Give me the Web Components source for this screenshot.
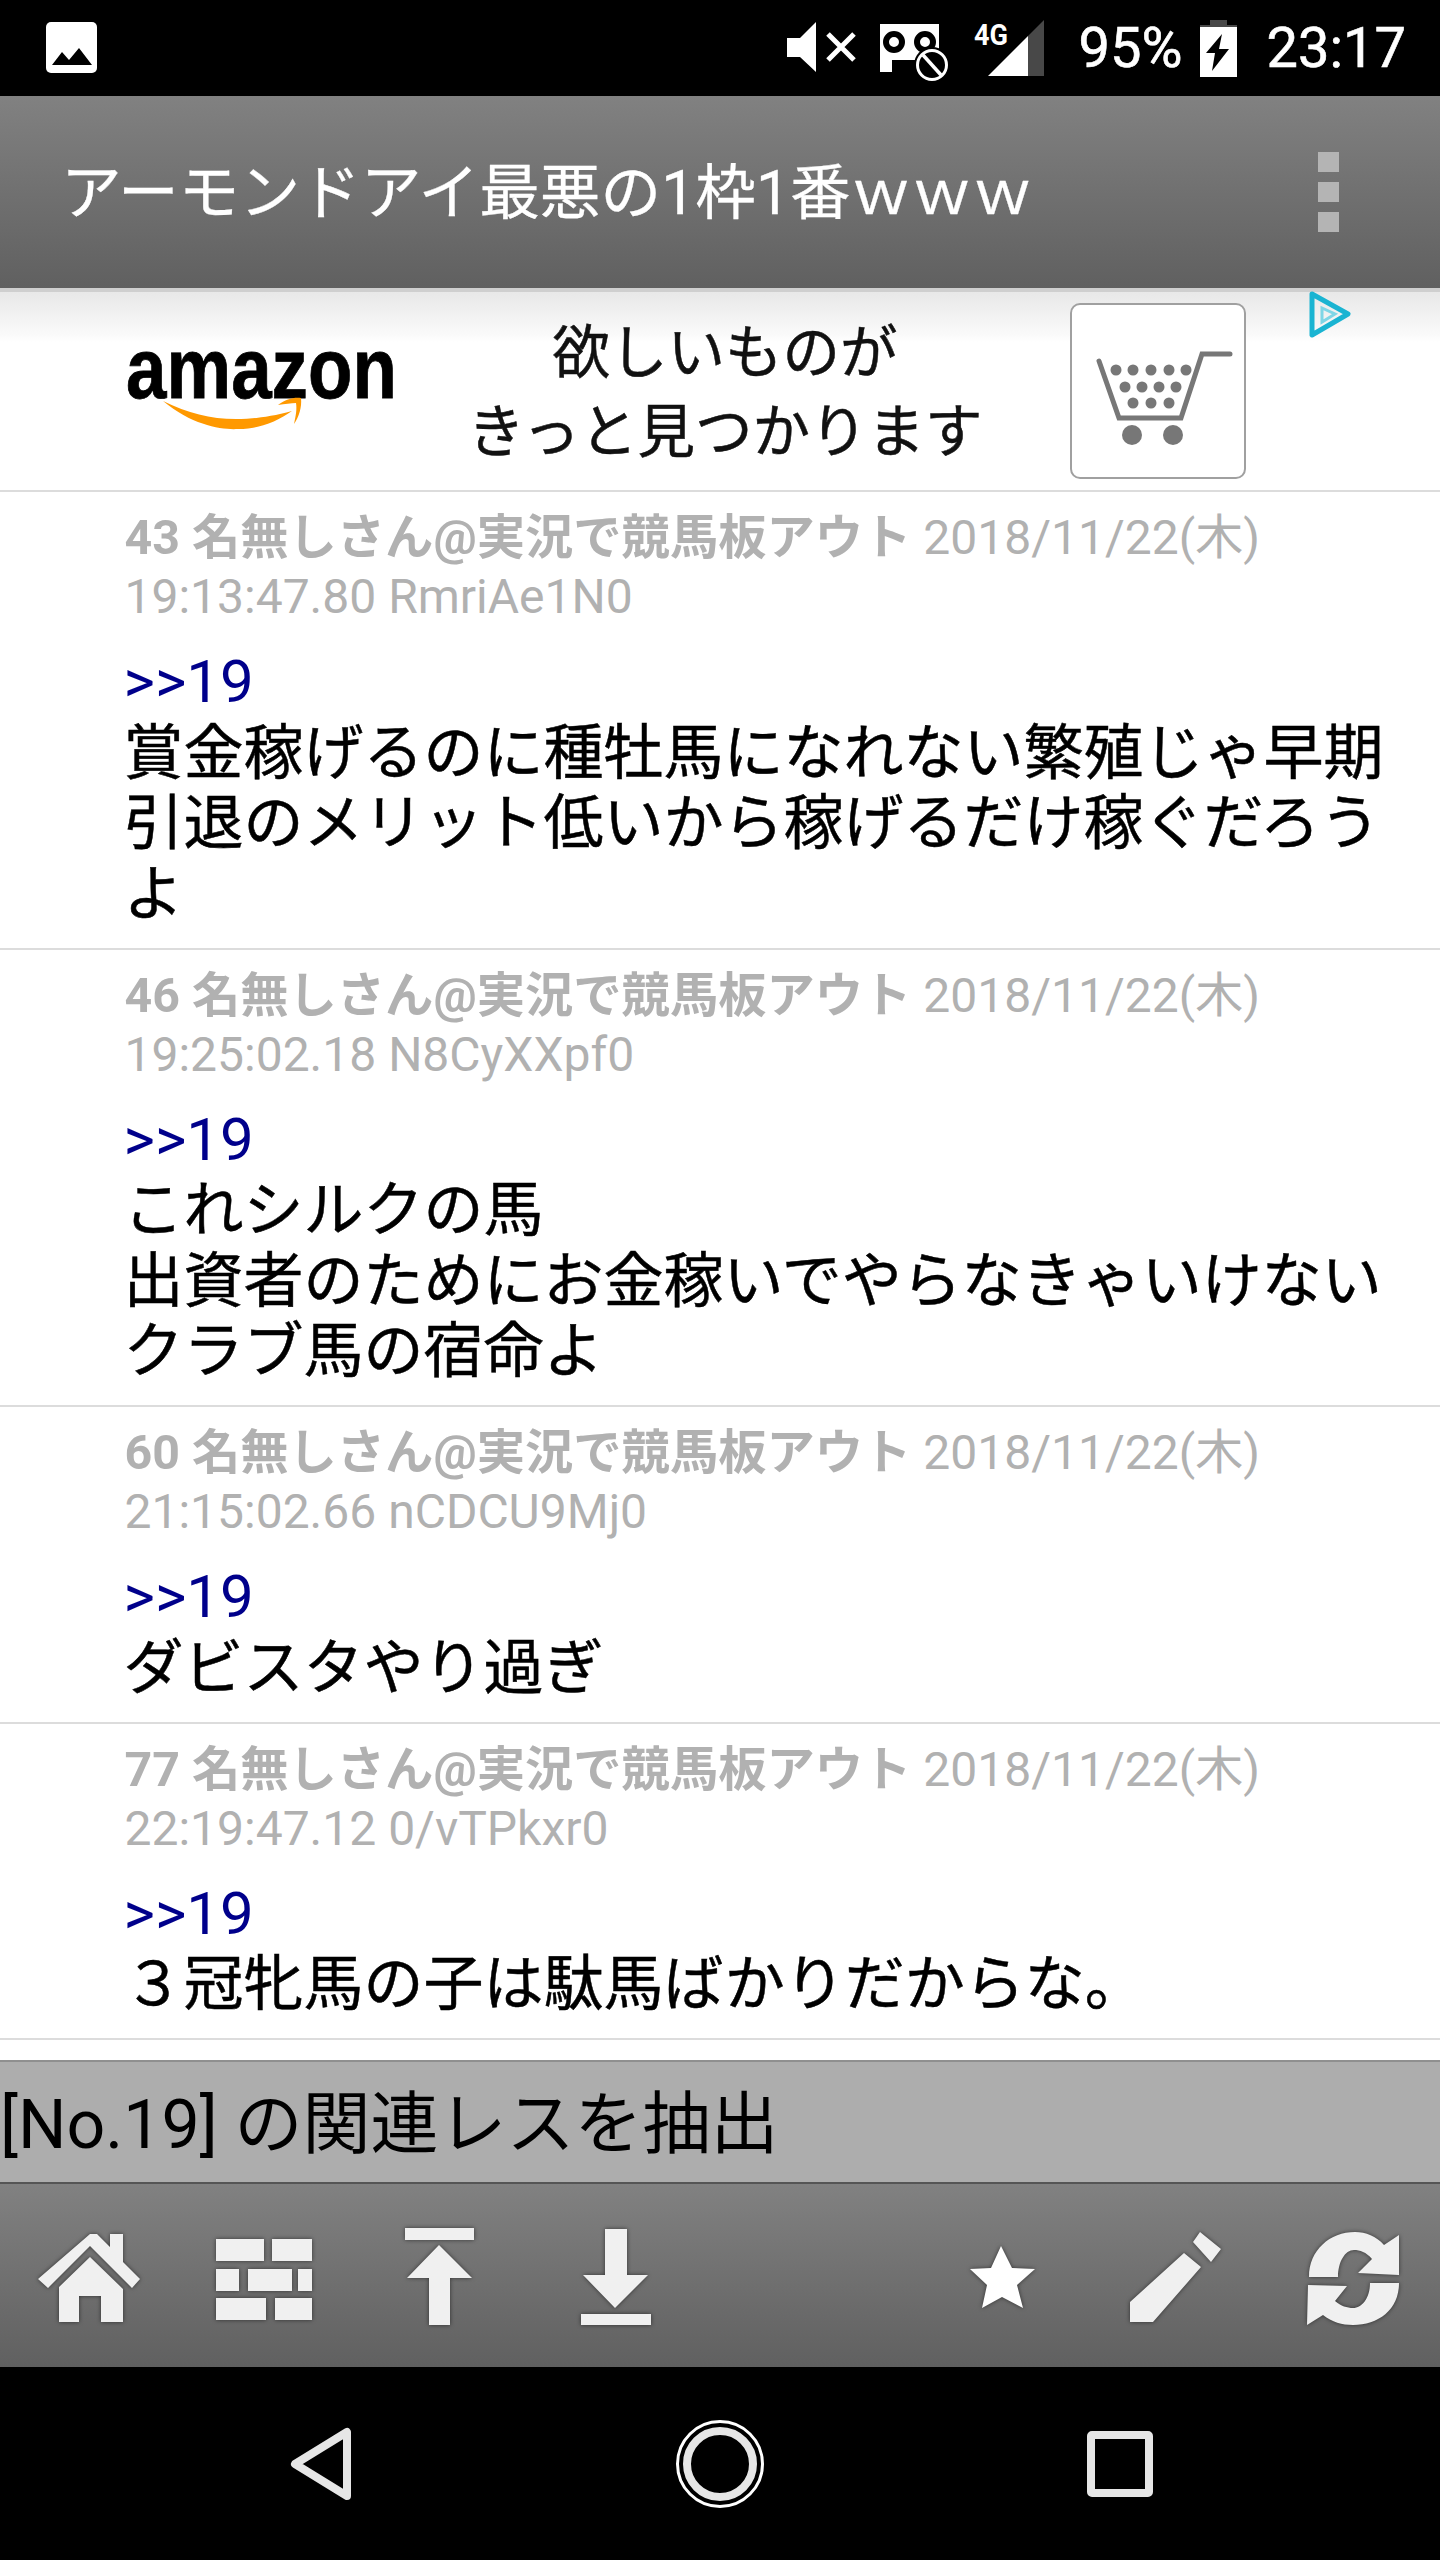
<!DOCTYPE html>
<html lang="ja">
<head>
<meta charset="utf-8">
<title>res</title>
<style>
    html, body { margin: 0; padding: 0; background: #fff; }
    body { width: 1440px; height: 2560px; overflow: hidden; font-family: Roboto, "Noto Sans CJK JP", sans-serif; }
</style>
</head>
<body>
<phone-screen>
    <status-bar></status-bar>
    <title-bar>アーモンドアイ最悪の1枠1番ｗｗｗ</title-bar>
    <ad-banner></ad-banner>
    <res-item num="43" date="2018/11/22(木)" time="19:13:47.80" uid="RmriAe1N0">賞金稼げるのに種牡馬になれない繁殖じゃ早期引退のメリット低いから稼げるだけ稼ぐだろうよ</res-item>
    <res-item num="46" date="2018/11/22(木)" time="19:25:02.18" uid="N8CyXXpf0">これシルクの馬<br>出資者のためにお金稼いでやらなきゃいけないクラブ馬の宿命よ</res-item>
    <res-item num="60" date="2018/11/22(木)" time="21:15:02.66" uid="nCDCU9Mj0">ダビスタやり過ぎ</res-item>
    <res-item num="77" date="2018/11/22(木)" time="22:19:47.12" uid="0/vTPkxr0">３冠牝馬の子は駄馬ばかりだからな。</res-item>
    <extract-bar>[No.19] の関連レスを抽出</extract-bar>
    <tool-bar></tool-bar>
    <nav-bar></nav-bar>
</phone-screen>

<script>
class PhoneScreen extends HTMLElement {
    constructor() {
        super();
        this.attachShadow({ mode: "open" });
        this.shadowRoot.innerHTML = `
            <style>
                :host {
                    display: flex;
                    flex-direction: column;
                    width: 1440px;
                    height: 2560px;
                    background: #fff;
                }
            </style>
            <slot></slot>
        `;
    }
}

class StatusBar extends HTMLElement {
    constructor() {
        super();
        this.attachShadow({ mode: "open" });
        this.shadowRoot.innerHTML = `
            <style>
                :host {
                    display: flex;
                    height: 96px;
                    background: #000;
                    color: #fff;
                    font-size: 56px;
                    align-items: flex-start;
                    flex: none;
                    -webkit-text-stroke: .6px #fff;
                }
                svg { display: block; height: 96px; flex: none; }
                .label { line-height: 96px; flex: none; }
                .pct { margin-left: 34px; width: 104px; white-space: nowrap; }
                .time { margin-left: 29px; }
                .spacer { flex: 1; }
            </style>
            <svg style="margin-left:46px" width="51" viewBox="46 0 51 96">
                <rect x="46" y="22" width="51" height="51" rx="5" fill="#fff"/>
                <path d="M52 65 L62 52 L69 60 L79 48 L92 65 Z" fill="#000"/>
            </svg>
            <div class="spacer"></div>
            <svg width="72" viewBox="786 0 72 96">
                <path d="M787 38 H800 L816 22 V72 L800 57 H787 Z" fill="#fff"/>
                <path d="M828 34 L854 60 M854 34 L828 60" stroke="#fff" stroke-width="5" fill="none"/>
            </svg>
            <svg style="margin-left:22px" width="70" viewBox="880 0 70 96">
                <path d="M880 24 H939 V60 H892 V72 H880 Z" fill="#fff"/>
                <circle cx="894" cy="42" r="8" fill="none" stroke="#000" stroke-width="6"/>
                <circle cx="925" cy="42" r="8" fill="none" stroke="#000" stroke-width="6"/>
                <circle cx="932" cy="65" r="18" fill="#000"/>
                <circle cx="932" cy="65" r="14.5" fill="none" stroke="#fff" stroke-width="3"/>
                <path d="M923 55 L941 75" stroke="#fff" stroke-width="3.5"/>
            </svg>
            <svg style="margin-left:23px" width="72" viewBox="973 0 72 96">
                <text x="974" y="45" font-family="Roboto" font-weight="700" font-size="30" fill="#fff" stroke="none" textLength="34" lengthAdjust="spacingAndGlyphs">4G</text>
                <path d="M988 76 L1028 36 V76 Z" fill="#fff"/>
                <path d="M1028 36 L1044 20 V76 H1028 Z" fill="#484848"/>
            </svg>
            <div class="label pct">95%</div>
            <svg style="margin-left:17px" width="38" viewBox="1199 0 38 96">
                <path d="M1209 20 H1226 V25 H1236 V34 H1199 V25 H1209 Z" fill="#484848"/>
                <rect x="1199" y="27" width="37" height="50" fill="#fff"/>
                <path d="M1221 34 L1205 53 H1214 L1211 71 L1228 49 H1218 Z" fill="#000"/>
            </svg>
            <div class="label time">23:17</div>
            <div style="width:34px;flex:none"></div>
        `;
    }
}

class TitleBar extends HTMLElement {
    constructor() {
        super();
        this.attachShadow({ mode: "open" });
        this.shadowRoot.innerHTML = `
            <style>
                :host {
                    display: flex;
                    align-items: center;
                    height: 192px;
                    flex: none;
                    padding-left: 61px;
                    padding-right: 101px;
                    box-sizing: border-box;
                    background: linear-gradient(#818181, #606060);
                    color: #fff;
                    font-size: 60.7px;
                    white-space: nowrap;
                    -webkit-text-stroke: .3px #fff;
                }
                .name { flex: 1; margin-top: -9px; }
                .menu { display: flex; flex-direction: column; gap: 10px; }
                .menu i { display: block; width: 21px; height: 20px; background: #b4b4b4; }
            </style>
            <div class="name"><slot></slot></div>
            <div class="menu"><i></i><i></i><i></i></div>
        `;
    }
}

class AdBanner extends HTMLElement {
    constructor() {
        super();
        this.attachShadow({ mode: "open" });
        this.shadowRoot.innerHTML = `
            <style>
                :host {
                    display: flex;
                    align-items: center;
                    position: relative;
                    height: 204px;
                    flex: none;
                    box-sizing: border-box;
                    border-top: 4px solid #cfcfcf;
                    border-bottom: 2px solid #dcdcdc;
                    background: linear-gradient(#e8e8e8, #fafafa 43px, #fff 50px);
                    color: #111;
                }
                .logo { position: relative; width: 270px; height: 100px; margin-left: 126px; flex: none; filter: blur(.5px); }
                .logo span {
                    position: absolute;
                    left: 0;
                    top: -23px;
                    font: 700 86px/100px "Liberation Sans", sans-serif;
                    color: #000;
                    -webkit-text-stroke: .8px #000;
                    transform: scaleX(.846);
                    transform-origin: 0 0;
                }
                .logo svg { position: absolute; left: 0; top: 8px; }
                .copy {
                    width: 560px;
                    margin-left: 49px;
                    padding-top: 4px;
                    text-align: center;
                    font-size: 57.5px;
                    line-height: 79px;
                    flex: none;
                    filter: blur(.4px);
                    white-space: nowrap;
                    -webkit-text-stroke: .5px #111;
                }
                .cart { margin-left: 65px; flex: none; display: block; filter: blur(.4px); }
                .choices { position: absolute; left: 1309px; top: -2px; }
            </style>
            <div class="logo">
                <span>amazon</span>
                <svg width="270" height="100" viewBox="128 348 270 100">
                    <path d="M165 400 C195 425 225 429 240 428 C262 428 280 420 294 410 C272 416 255 418 238 418 C212 418 190 412 165 400 Z" fill="#f90"/>
                    <path d="M280 404 C288 398 296 396 303 397 C304 406 301 416 296 423 C298 414 299 408 298 402 C293 402 287 403 280 404 Z" fill="#f90"/>
                </svg>
            </div>
            <div class="copy">欲しいものが<br>きっと見つかります</div>
            <svg class="cart" width="176" height="176" viewBox="1070 302 176 176">
                <rect x="1071" y="303" width="174" height="174" rx="9" fill="#fff" stroke="#a0a0a0" stroke-width="2"/>
                <path d="M1099 360 L1119 417 H1181 L1202 353 H1230" fill="none" stroke="#777" stroke-width="5" stroke-linecap="round"/>
                <g fill="#777">
                    <circle cx="1132" cy="434" r="10"/><circle cx="1173" cy="434" r="10"/>
                    <circle cx="1116" cy="369" r="5.5"/><circle cx="1133" cy="369" r="5.5"/><circle cx="1151" cy="369" r="5.5"/><circle cx="1169" cy="369" r="5.5"/><circle cx="1186" cy="369" r="5.5"/>
                    <circle cx="1125" cy="386" r="5.5"/><circle cx="1142" cy="386" r="5.5"/><circle cx="1159" cy="386" r="5.5"/><circle cx="1176" cy="386" r="5.5"/>
                    <circle cx="1133" cy="402" r="5.5"/><circle cx="1151" cy="402" r="5.5"/><circle cx="1169" cy="402" r="5.5"/>
                </g>
            </svg>
            <svg class="choices" width="44" height="50" viewBox="1309 292 44 50">
                <path d="M1312 296 L1348 316 L1312 337 Z" fill="none" stroke="#1ab4d2" stroke-width="5" stroke-linejoin="round"/>
                <path d="M1322 310 L1335 316 L1322 324 Z" fill="none" stroke="#7fd6e6" stroke-width="3"/>
            </svg>
        `;
    }
}

class ResItem extends HTMLElement {
    constructor() {
        super();
        this.attachShadow({ mode: "open" });
        this.shadowRoot.innerHTML = `
            <style>
                :host {
                    display: block;
                    flex: none;
                    box-sizing: border-box;
                    padding: 16px 40px 17.5px 123.5px;
                    border-bottom: 2px solid #dcdcdc;
                    background: #fff;
                }
                .meta {
                    margin-left: 1px;
                    font-size: 48px;
                    line-height: 59px;
                    height: 118px;
                    color: #b1b1b1;
                    margin-bottom: 21px;
                }
                .num { font-weight: 700; font-size: 48.3px; }
                .body {
                    font-size: 60px;
                    line-height: 70.5px;
                    color: #000;
                    -webkit-text-stroke: .5px #000;
                }
                .anchor { color: #00008b; display: block; margin-bottom: 1px; -webkit-text-stroke: 0; }
            </style>
            <div class="meta"><span class="num"></span> <span class="date"></span> <span class="time"></span> <span class="uid"></span></div>
            <div class="body"><span class="anchor">&gt;&gt;19</span><slot></slot></div>
        `;
    }

    connectedCallback() {
        const root = this.shadowRoot;
        root.querySelector(".num").innerText = this.getAttribute("num") + " 名無しさん@実況で競馬板アウト";
        root.querySelector(".date").innerText = this.getAttribute("date");
        root.querySelector(".time").innerText = this.getAttribute("time");
        root.querySelector(".uid").innerText = this.getAttribute("uid");
    }
}

class ExtractBar extends HTMLElement {
    constructor() {
        super();
        this.attachShadow({ mode: "open" });
        this.shadowRoot.innerHTML = `
            <style>
                :host {
                    display: block;
                    flex: none;
                    box-sizing: border-box;
                    height: 124px;
                    margin-top: 20px;
                    background: #adadad;
                    border-top: 2px solid #8f8f8f;
                    border-bottom: 2px solid #555;
                    color: #000;
                    font-size: 68px;
                    line-height: 126px;
                    white-space: nowrap;
                }
            </style>
            <slot></slot>
        `;
    }
}

class ToolBar extends HTMLElement {
    constructor() {
        super();
        this.attachShadow({ mode: "open" });
        this.shadowRoot.innerHTML = `
            <style>
                :host {
                    display: flex;
                    align-items: flex-start;
                    flex: none;
                    height: 183px;
                    box-sizing: border-box;
                    padding-top: 44px;
                    background: linear-gradient(#818181, #606060);
                }
                svg {
                    display: block;
                    flex: none;
                    height: 100px;
                    overflow: visible;
                    filter: drop-shadow(0 0 2px rgba(0,0,0,.55));
                }
                path { fill: #f0f0f0; }
            </style>
            <svg style="margin-left:34px" width="110" viewBox="34 2228 110 100">
                <path d="M110 2234 H123 V2262 L140 2279 L132 2288 L90 2246 L48 2288 L38 2279 L90 2234 L97 2234 L110 2247 Z"/>
                <path d="M90 2257 L123 2289 V2322 H101 V2296 H79 V2322 H59 V2287 Z"/>
            </svg>
            <svg style="margin-left:68px" width="104" viewBox="212 2228 104 100">
                <path d="M216 2239 H264 V2261 H216 Z M272 2239 H312 V2261 H272 Z M216 2269 H239 V2291 H216 Z M248 2269 H292 V2291 H248 Z M298 2269 H312 V2291 H298 Z M216 2298 H266 V2320 H216 Z M275 2298 H312 V2320 H275 Z"/>
            </svg>
            <svg style="margin-left:85px" width="77" viewBox="401 2228 77 100">
                <path d="M405 2228 H474 V2240 H405 Z M439 2245 L472 2278 H450 V2325 H429 V2278 H407 Z"/>
            </svg>
            <svg style="margin-left:99px" width="78" viewBox="577 2228 78 100">
                <path d="M605 2229 H627 V2275 H648 L615 2308 L583 2275 H605 Z M581 2314 H651 V2325 H581 Z"/>
            </svg>
            <svg style="margin-left:311px" width="72" viewBox="966 2228 72 100">
                <path d="M1001 2246 L1012 2268 L1035 2269 L1017 2285 L1023 2308 L1002 2297 L982 2308 L987 2285 L970 2269 L991 2268 Z" style="fill:#fff"/>
            </svg>
            <svg style="margin-left:88px" width="99" viewBox="1126 2228 99 100">
                <path d="M1130 2302 L1184 2253 L1201 2267 L1153 2322 H1130 Z M1200 2232 L1221 2249 L1211 2262 L1193 2242 Z"/>
            </svg>
            <svg style="margin-left:79px" width="99" viewBox="1304 2228 99 100">
                <path d="M1309 2277 C1309 2250 1330 2232 1355 2232 C1366 2232 1376 2236 1384 2245 L1399 2235 V2275 L1358 2273 L1372 2259 C1366 2252 1360 2250 1354 2250 C1345 2250 1338 2262 1338 2277 Z"/>
                <path d="M1399 2283 C1399 2310 1378 2325 1353 2325 C1342 2325 1332 2322 1323 2315 L1307 2325 L1308 2285 L1347 2286 L1335 2301 C1341 2306 1347 2308 1353 2308 C1362 2308 1370 2298 1370 2283 Z"/>
            </svg>
        `;
    }
}

class NavBar extends HTMLElement {
    constructor() {
        super();
        this.attachShadow({ mode: "open" });
        this.shadowRoot.innerHTML = `
            <style>
                :host {
                    display: flex;
                    align-items: center;
                    flex: 1;
                    background: #000;
                }
                svg { display: block; flex: none; }
                .square {
                    flex: none;
                    box-sizing: border-box;
                    width: 66px;
                    height: 66px;
                    border: 8px solid #e6e6e6;
                    border-radius: 5px;
                    margin-left: 322px;
                }
            </style>
            <svg style="margin-left:285px" width="70" height="80" viewBox="285 2424 70 80">
                <path d="M295 2464 L347 2432 V2496 Z" fill="none" stroke="#e6e6e6" stroke-width="8" stroke-linejoin="round"/>
            </svg>
            <svg style="margin-left:320px" width="90" height="90" viewBox="675 2419 90 90">
                <circle cx="720" cy="2464" r="42.5" fill="none" stroke="#fff" stroke-width="3"/>
                <circle cx="720" cy="2464" r="33" fill="none" stroke="#e6e6e6" stroke-width="8"/>
            </svg>
            <div class="square"></div>
        `;
    }
}

customElements.define("phone-screen", PhoneScreen);
customElements.define("status-bar", StatusBar);
customElements.define("title-bar", TitleBar);
customElements.define("ad-banner", AdBanner);
customElements.define("res-item", ResItem);
customElements.define("extract-bar", ExtractBar);
customElements.define("tool-bar", ToolBar);
customElements.define("nav-bar", NavBar);
</script>
</body>
</html>
